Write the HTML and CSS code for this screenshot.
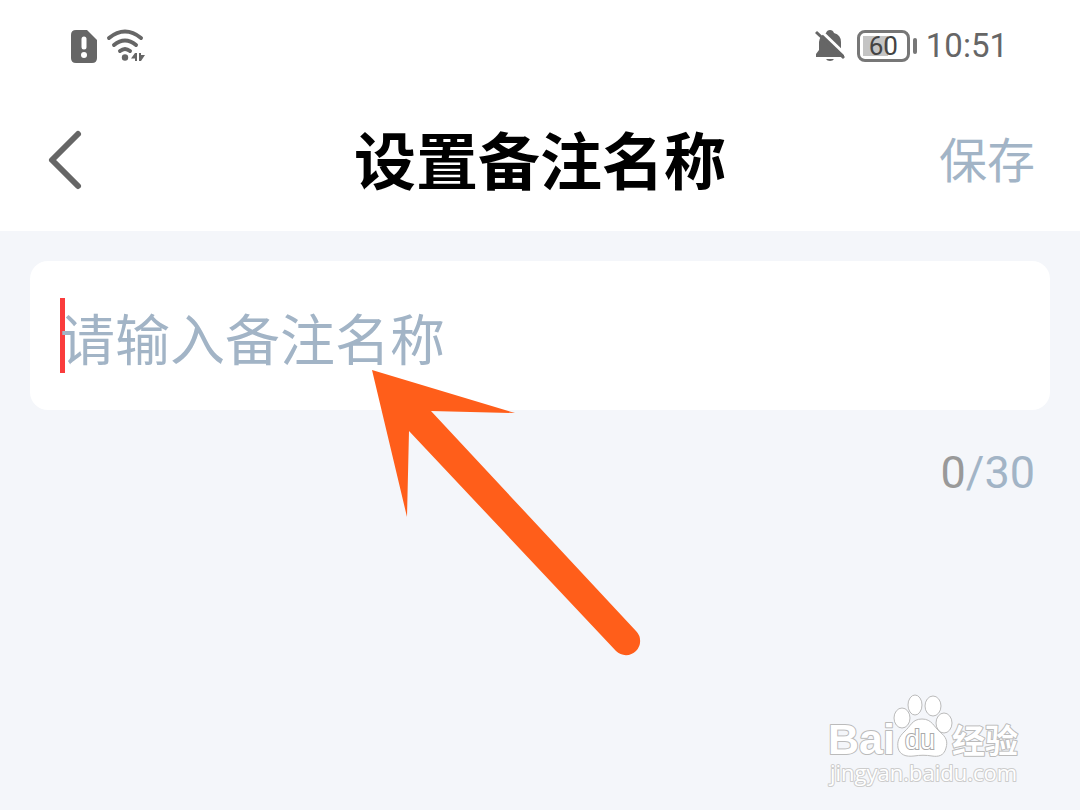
FILE: index.html
```html
<!DOCTYPE html>
<html lang="zh-CN">
<head>
<meta charset="utf-8">
<meta name="viewport" content="width=device-width, initial-scale=1">
<title>设置备注名称</title>
<link rel="stylesheet" href="styles.css">
</head>
<body>
<div class="top">
  <div class="status">
    <div class="status-group">
      <svg class="sim" viewBox="0 0 26 33" aria-hidden="true">
        <path d="M5 0H16L26 10V28Q26 33 21 33H5Q0 33 0 28V5Q0 0 5 0Z" fill="#666"/>
        <path d="M13 9V17" stroke="#fff" stroke-width="5" stroke-linecap="round"/>
        <circle cx="13" cy="25" r="3" fill="#fff"/>
      </svg>
      <svg class="wifi" viewBox="0 0 38 33" aria-hidden="true">
        <g fill="none" stroke="#666" stroke-width="4" stroke-linecap="round">
          <path d="M2 8Q18 -5 34 8"/>
          <path d="M7 15Q18 6 29 15"/>
          <path d="M13 21Q18 17 23 21"/>
        </g>
        <circle cx="18" cy="27.500" r="3.200" fill="#666"/>
        <path d="M28 23V31H30V23ZM28 23L24 28.500H28ZM32 23V31H34V23ZM34 31L38 25H34Z" fill="#666"/>
      </svg>
    </div>
    <div class="status-group">
      <svg class="bell" viewBox="0 0 32 32" aria-hidden="true">
        <path d="M1 27V24L4 20V12Q5 5 11 3Q12 0 15 0Q18 0 19 3Q26 5 26 12V20L29 24V27Z" fill="#666"/>
        <path d="M11 29H19Q18 31 15 31Q12 31 11 29Z" fill="#666"/>
        <path d="M4 -1L32 26" stroke="#fff" stroke-width="3"/>
        <path d="M1 2L29 28" stroke="#666" stroke-width="3"/>
      </svg>
      <div class="battery"><span class="battery-level">60</span></div>
      <time class="clock">10:51</time>
    </div>
  </div>
  <header class="bar">
    <button class="back" type="button" aria-label="返回">
      <svg class="back-icon" viewBox="0 0 32 58" aria-hidden="true">
        <path d="M29 3L3 29L29 55" fill="none" stroke="#666" stroke-width="6" stroke-linecap="round" stroke-linejoin="round"/>
      </svg>
    </button>
    <h1 class="title">设置备注名称</h1>
    <button class="save" type="button">保存</button>
  </header>
</div>
<main class="content">
  <div class="field">
    <span class="caret"></span>
    <input class="name" type="text" maxlength="30" placeholder="请输入备注名称" aria-label="备注名称">
  </div>
  <p class="counter"><span class="count">0</span>/30</p>
  <svg class="arrow" viewBox="0 0 268 286" aria-hidden="true">
    <path d="M0 0L143 43L59 41L264 261A14 14 0 0 1 244 281L37 61L35 147Z" fill="#ff5e1a"/>
  </svg>
</main>
<footer class="footer">
  <svg class="mark" viewBox="0 0 200 95" role="img" aria-label="Baidu 经验">
    <g class="mark-text">
      <text class="mark-bai" x="4" y="59">Bai</text>
      <text class="mark-cn" x="128" y="58">经验</text>
      <text class="mark-url" x="6" y="86">jingyan.baidu.com</text>
    </g>
    <g fill="#fff" stroke="#bbb" stroke-width="1">
      <ellipse cx="78" cy="23" rx="8" ry="10"/>
      <ellipse cx="91" cy="10" rx="7" ry="10"/>
      <ellipse cx="109" cy="11" rx="8" ry="10"/>
      <ellipse cx="120" cy="28" rx="8" ry="10"/>
      <path d="M98 24C108 24 110 32 116 37C122 42 124 46 122 53C120 61 114 62 108 61C102 60 96 60 90 61C82 62 76 60 74 53C73 46 75 42 80 37C87 31 88 24 98 24Z"/>
    </g>
    <text class="mark-du" x="81" y="54">du</text>
  </svg>
</footer>
</body>
</html>
```
FILE: styles.css
```css
* {
  box-sizing: border-box;
}

body {
  margin: 0;
  min-height: 100vh;
  display: flex;
  flex-direction: column;
  background: #f4f6fa;
  color: #666;
  font-family: Roboto, "Noto Sans CJK SC", sans-serif;
}

button {
  padding: 0;
  border: 0;
  background: none;
  font-family: inherit;
}

svg {
  display: block;
  overflow: visible;
}

.top {
  background: #fff;
}

.status {
  display: flex;
  justify-content: space-between;
  align-items: center;
  height: 92px;
  padding: 0 72px 0 71px;
}

.status-group {
  display: flex;
  align-items: center;
  gap: 10px;
}

.sim {
  width: 26px;
  height: 33px;
}

.wifi {
  width: 38px;
  height: 33px;
}

.bell {
  width: 32px;
  height: 32px;
}

.battery {
  position: relative;
  width: 53px;
  height: 32px;
  padding: 3px;
  border: 3px solid #777;
  border-radius: 8px;
}

.battery::after {
  content: "";
  position: absolute;
  top: 5px;
  right: -10px;
  width: 4px;
  height: 16px;
  border-radius: 2px;
  background: #777;
}

.battery-level {
  display: block;
  height: 20px;
  background: linear-gradient(90deg, #c4c4c4 60%, #fff 60%);
  color: #444;
  font-size: 26px;
  line-height: 20px;
  text-align: center;
}

.clock {
  margin-left: 6px;
  font-size: 33px;
  line-height: 40px;
}

.bar {
  display: grid;
  grid-template-columns: 1fr auto 1fr;
  align-items: center;
  height: 139px;
  padding: 0 45px;
}

.back {
  justify-self: start;
  padding: 0 4px 4px;
}

.back-icon {
  width: 32px;
  height: 58px;
}

.title {
  margin: 0;
  padding-top: 4px;
  color: #000;
  font-size: 62px;
  font-weight: 700;
  line-height: 72px;
}

.save {
  justify-self: end;
  color: #a2b4c6;
  font-size: 48px;
  line-height: 56px;
}

.content {
  position: relative;
  flex: 1;
  padding: 30px;
}

.field {
  position: relative;
  padding: 37px 30px;
  border-radius: 18px;
  background: #fff;
}

.caret {
  position: absolute;
  top: 37px;
  left: 30px;
  width: 5px;
  height: 75px;
  background: #fa3c3c;
}

.name {
  position: relative;
  display: block;
  width: 100%;
  height: 75px;
  padding: 0;
  border: 0;
  outline: 0;
  background: transparent;
  color: #333;
  font-family: "Noto Sans CJK SC", sans-serif;
  font-size: 55px;
}

.name::placeholder {
  color: #a2b4c6;
  opacity: 1;
}

.counter {
  margin: 36px 15px 0;
  color: #a2b4c6;
  font-size: 45px;
  line-height: 54px;
  text-align: right;
}

.count {
  color: #999;
}

.arrow {
  position: absolute;
  top: 139px;
  left: 372px;
  width: 268px;
  height: 286px;
}

.footer {
  display: flex;
  justify-content: flex-end;
  padding: 0 56px 20px;
}

.mark {
  width: 200px;
  height: 95px;
}

.mark-text {
  fill: #fff;
  stroke: #bbb;
  stroke-width: 2px;
  stroke-linejoin: round;
  paint-order: stroke;
}

.mark-bai {
  font-family: "Liberation Sans", sans-serif;
  font-size: 43px;
  font-weight: 700;
}

.mark-du {
  fill: #fff;
  stroke: #aaa;
  stroke-width: 2px;
  paint-order: stroke;
  font-family: "Liberation Sans", sans-serif;
  font-size: 27px;
}

.mark-cn {
  font-family: "Noto Sans CJK SC", sans-serif;
  font-size: 33px;
  font-weight: 700;
}

.mark-url {
  font-family: "Open Sans", sans-serif;
  font-size: 22px;
  stroke: #ccc;
}
```
